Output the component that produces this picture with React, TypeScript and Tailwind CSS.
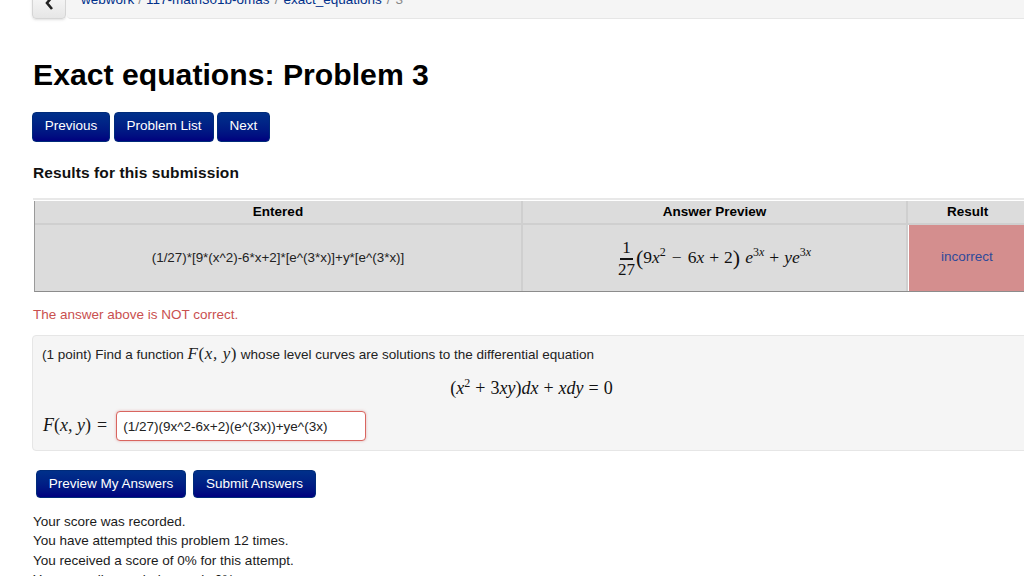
import React from 'react'

const NavButton = ({ label, className }: { label: string; className: string }) => (
  <button className={`flex items-center justify-center rounded-[4px] border border-[#002b7a] bg-gradient-to-b from-[#00308a] to-[#00007f] text-[13.5px] text-white ${className}`}>
    {label}
  </button>
)

const M = ({ children, className = '' }: { children: React.ReactNode; className?: string }) => (
  <span className={`font-['Liberation_Serif',serif] italic ${className}`}>{children}</span>
)

const R = ({ children, className = '' }: { children: React.ReactNode; className?: string }) => (
  <span className={`font-['Liberation_Serif',serif] not-italic ${className}`}>{children}</span>
)

const Sup = ({ children }: { children: React.ReactNode }) => (
  <sup className="relative -top-[7px] align-baseline text-[12px] leading-none">{children}</sup>
)

export default function App() {
  return (
    <div className="h-[576px] w-[1024px] overflow-hidden bg-white font-['Liberation_Sans',Arial,sans-serif] text-[13.5px] leading-[19.5px] text-[#1a1a1a]">
      {/* Breadcrumb */}
      <div className="-mt-[16px] flex h-[35px] gap-[1px] pl-[32px]">
        <button className="flex h-full w-[34px] items-center justify-center rounded-[4px] border border-[#d5d5d5] bg-gradient-to-b from-white to-[#e6e6e6] pt-[12px] shadow-sm">
          <svg width="10" height="14" viewBox="0 0 10 14" className="-mt-[10px]">
            <path d="M8 1 L3 7 L8 13" fill="none" stroke="#222" strokeWidth="2.6" />
          </svg>
        </button>
        <div className="flex h-full flex-1 items-end rounded-l-[4px] border-b border-[#e6e6e6] bg-[#f5f5f5] pl-[14px]">
          <span className="mb-[9px] text-[#00308a]">webwork</span>
          <span className="mx-[4px] mb-[9px] text-[#888]">/</span>
          <span className="mb-[9px] text-[#00308a]">117-math301b-omas</span>
          <span className="mx-[5px] mb-[9px] text-[#888]">/</span>
          <span className="mb-[9px] text-[#00308a]">exact_equations</span>
          <span className="mx-[5px] mb-[9px] text-[#888]">/</span>
          <span className="mb-[9px] text-[#888]">3</span>
        </div>
      </div>

      <div className="pl-[33px]">
        <h1 className="mt-[37px] h-[38px] text-[30.2px] font-bold leading-[38px] text-black">Exact equations: Problem 3</h1>

        <div className="-ml-[1px] mt-[18px] flex h-[30px] gap-[4px]">
          <NavButton label="Previous" className="w-[78px] pb-[2px]" />
          <NavButton label="Problem List" className="w-[100px] pb-[2px]" />
          <div className="-ml-[1px]">
            <NavButton label="Next" className="h-[30px] w-[53px] pb-[2px]" />
          </div>
        </div>

        <h2 className="mt-[21px] text-[15.5px] font-bold leading-[20px] tracking-[0.1px] text-[#111]">Results for this submission</h2>

        {/* Results table */}
        <div className="mt-[15px] w-[1100px] border-t-2 border-[#e8e8e8] pt-[1px]">
          <div className="ml-[1px] grid grid-cols-[488px_385px_226px] border-b border-l border-b-[#8c8c8c] border-l-[#9a9a9a] bg-[#dcdcdc]">
            <div className="flex h-[24px] items-center justify-center border-b-2 border-r-2 border-[#cfcfcf] text-[13.5px] font-bold text-black">Entered</div>
            <div className="flex h-[24px] items-center justify-center border-b-2 border-r-2 border-[#cfcfcf] text-[13.5px] font-bold text-black">Answer Preview</div>
            <div className="h-[24px] border-b-2 border-[#cfcfcf] pl-[39px] pt-[1px] text-[13.5px] font-bold text-black">Result</div>
            <div className="flex h-[66px] items-center justify-center border-r-2 border-[#cfcfcf] text-[13.4px] text-[#222]">
              (1/27)*[9*(x^2)-6*x+2]*[e^(3*x)]+y*[e^(3*x)]
            </div>
            <div className="flex h-[66px] items-center justify-center border-r-2 border-[#cfcfcf] text-[17.5px] text-[#111]">
              <span className="mr-[1px] inline-flex flex-col items-center text-[17px] leading-[19px]">
                <R className="border-b-2 border-[#111] px-[2px] pb-[1px]">1</R>
                <R>27</R>
              </span>
              <span className="flex items-center">
                <R className="text-[22px] leading-none">(</R>
                <R>9</R><M>x</M><R><Sup>2</Sup></R>
                <R className="mx-[6px]">−</R>
                <R>6</R><M>x</M>
                <R className="mx-[5px]">+</R>
                <R>2</R>
                <R className="text-[22px] leading-none">)</R>
                <M className="ml-[5px]">e</M><R><Sup>3<i>x</i></Sup></R>
                <R className="mx-[5px]">+</R>
                <M>ye</M><R><Sup>3<i>x</i></Sup></R>
              </span>
            </div>
            <div className="h-[66px] border-l border-l-white bg-[#d48e8e] pl-[32px] pt-[22px] text-[13.5px] text-[#2f4a9a]">incorrect</div>
          </div>
        </div>

        <p className="mt-[13px] text-[#c9504f]">The answer above is NOT correct.</p>

        {/* Problem */}
        <div className="-ml-[1px] mt-[10px] h-[116px] w-[1100px] rounded-[4px] border border-[#e6e6e6] bg-[#f5f5f5] pl-[9px] pt-[8px]">
          <div className="leading-[19.5px] text-[#222]">
            (1 point) Find a function <M className="text-[17px] tracking-[0.6px]">F</M><R className="text-[17px] tracking-[0.6px]">(</R><M className="text-[17px] tracking-[0.6px]">x, y</M><R className="text-[17px] tracking-[0.6px]">)</R> whose level curves are solutions to the differential equation
          </div>
          <div className="mt-[14px] flex h-[21px] w-[979px] items-center justify-center text-[18px] text-[#111]">
            <R>(</R><M>x</M><R><Sup>2</Sup></R>
            <R className="mx-[5px]">+</R>
            <R>3</R><M>xy</M><R>)</R><M>dx</M>
            <R className="mx-[5px]">+</R>
            <M>xdy</M>
            <R className="mx-[5px]">=</R>
            <R>0</R>
          </div>
          <div className="mt-[12px] flex h-[30px] items-center">
            <M className="ml-[1px] text-[18px] text-[#111]">F</M><R className="text-[18px]">(</R><M className="text-[18px]">x, y</M><R className="text-[18px]">)</R>
            <R className="ml-[6px] text-[18px]">=</R>
            <input
              readOnly
              value="(1/27)(9x^2-6x+2)(e^(3x))+ye^(3x)"
              className="ml-[9px] h-[30px] w-[250px] rounded-[4px] border border-[#d9655f] bg-white px-[6px] text-[13.5px] text-[#222] shadow-[0_0_3px_rgba(200,80,80,0.4)] outline-none"
            />
          </div>
        </div>

        <div className="ml-[3px] mt-[19px] flex h-[28px] gap-[7px]">
          <NavButton label="Preview My Answers" className="w-[150px]" />
          <NavButton label="Submit Answers" className="w-[123px]" />
        </div>

        <div className="mt-[14px] leading-[19.5px] text-[#1a1a1a]">
          <p>Your score was recorded.</p>
          <p>You have attempted this problem 12 times.</p>
          <p>You received a score of 0% for this attempt.</p>
          <p>Your overall recorded score is 0%.</p>
        </div>
      </div>
    </div>
  )
}
